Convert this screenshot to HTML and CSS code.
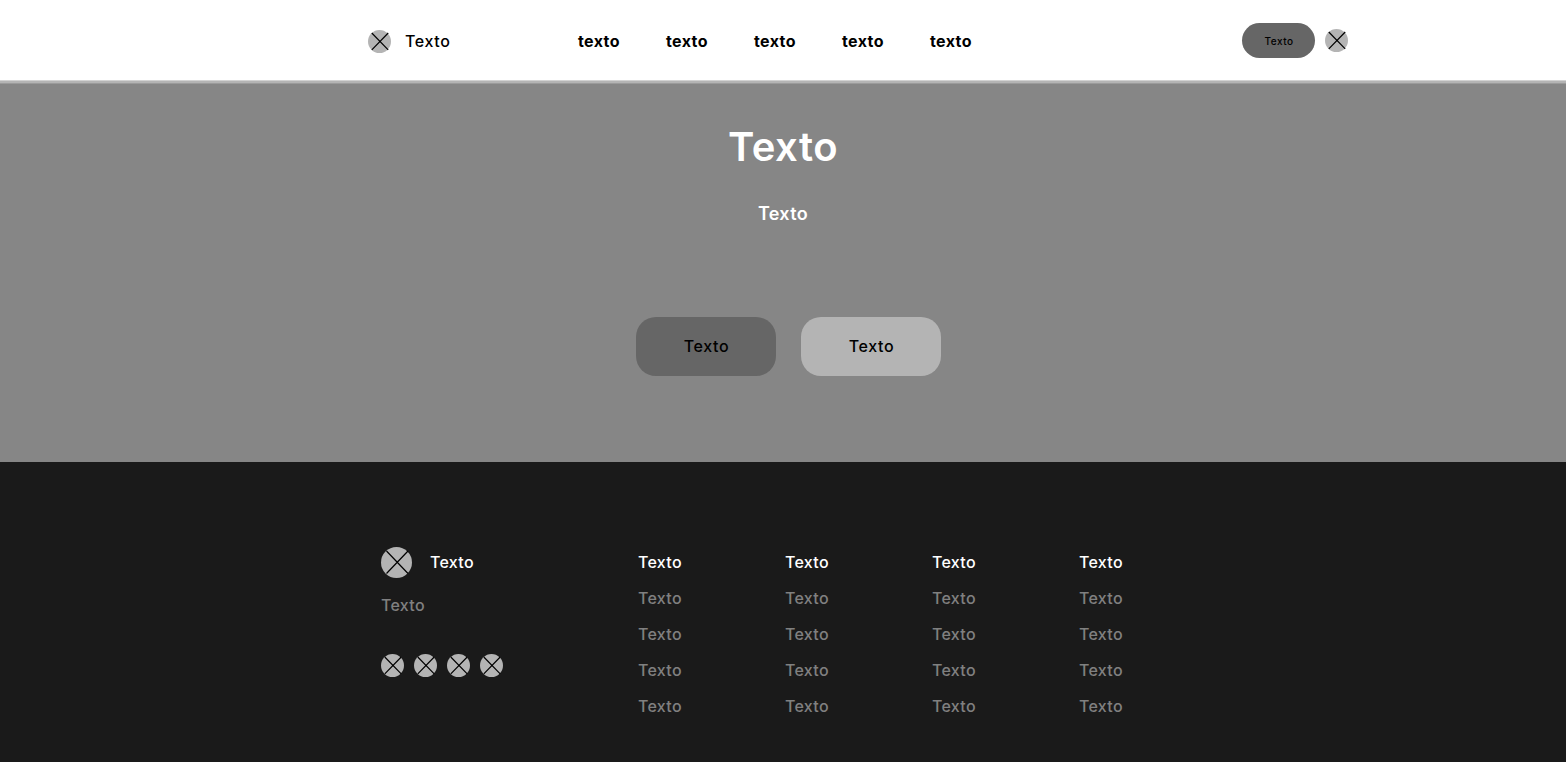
FILE: index.html
```html
<!DOCTYPE html>
<html lang="es">
<head>
<meta charset="utf-8">
<title>Texto</title>
<link rel="stylesheet" href="styles.css">
</head>
<body>
<header class="header">
  <div class="brand">
    <svg class="dot" viewBox="0 0 23 23"><circle cx="11.5" cy="11.5" r="11.5"/><path d="M3.8 3L20.2 19.8M20.2 3L3.8 19.8"/></svg>
    <span>Texto</span>
  </div>
  <nav class="nav"><a>texto</a><a>texto</a><a>texto</a><a>texto</a><a>texto</a></nav>
  <div class="actions">
    <button class="pill">Texto</button>
    <svg class="dot" viewBox="0 0 23 23"><circle cx="11.5" cy="11.5" r="11.5"/><path d="M3.8 3L20.2 19.8M20.2 3L3.8 19.8"/></svg>
  </div>
</header>
<main class="hero">
  <h1>Texto</h1>
  <p>Texto</p>
  <div class="buttons"><button class="btn btn-dark">Texto</button><button class="btn btn-light">Texto</button></div>
</main>
<footer class="footer">
  <section class="about">
    <div class="about-head">
      <svg class="dot dot-large" viewBox="0 0 31 31"><circle cx="15.5" cy="15.5" r="15.5"/><path d="M5.5 4L27 26.5M27 4L5.5 26.5"/></svg>
      <span>Texto</span>
    </div>
    <p>Texto</p>
    <div class="social">
      <svg class="dot" viewBox="0 0 23 23"><circle cx="11.5" cy="11.5" r="11.5"/><path d="M3.8 3L20.2 19.8M20.2 3L3.8 19.8"/></svg>
      <svg class="dot" viewBox="0 0 23 23"><circle cx="11.5" cy="11.5" r="11.5"/><path d="M3.8 3L20.2 19.8M20.2 3L3.8 19.8"/></svg>
      <svg class="dot" viewBox="0 0 23 23"><circle cx="11.5" cy="11.5" r="11.5"/><path d="M3.8 3L20.2 19.8M20.2 3L3.8 19.8"/></svg>
      <svg class="dot" viewBox="0 0 23 23"><circle cx="11.5" cy="11.5" r="11.5"/><path d="M3.8 3L20.2 19.8M20.2 3L3.8 19.8"/></svg>
    </div>
  </section>
  <div class="links">
    <ul><li>Texto</li><li>Texto</li><li>Texto</li><li>Texto</li><li>Texto</li></ul>
    <ul><li>Texto</li><li>Texto</li><li>Texto</li><li>Texto</li><li>Texto</li></ul>
    <ul><li>Texto</li><li>Texto</li><li>Texto</li><li>Texto</li><li>Texto</li></ul>
    <ul><li>Texto</li><li>Texto</li><li>Texto</li><li>Texto</li><li>Texto</li></ul>
  </div>
</footer>
</body>
</html>
```
FILE: styles.css
```css
* { box-sizing: border-box; margin: 0; padding: 0; }
body { font: 500 16px/20px Inter, sans-serif; letter-spacing: 0.6px; color: #000; }
button { font: inherit; letter-spacing: inherit; color: inherit; border: 0; }
.dot { display: block; width: 23px; height: 23px; flex: none; }
.dot circle { fill: #b4b4b4; }
.dot path { stroke: #000; stroke-width: 1.2; fill: none; }
.dot-large { width: 31px; height: 31px; }
.header { display: flex; height: 84px; padding-left: 368px; background: linear-gradient(#fff 80px, #d2d2d2 80px, #d2d2d2 81px, #b4b4b4 81px, #b4b4b4 83px, #9a9a9a 83px); }
.brand { display: flex; align-items: center; gap: 14px; width: 210px; height: 83px; }
.brand span { padding-bottom: 2px; }
.nav { display: flex; align-items: center; height: 81px; width: 664px; font-weight: 700; letter-spacing: 0.4px; }
.nav a { width: 88px; }
.actions { display: flex; align-items: center; gap: 10px; height: 81px; }
.pill { width: 73px; height: 35px; border-radius: 18px; background: #666; font-size: 10px; letter-spacing: 0.5px; padding-left: 1px; }
.hero { display: flex; flex-direction: column; align-items: center; height: 378px; padding-top: 38px; background: #868686; color: #fff; }
.hero h1 { font-size: 40px; line-height: 50px; font-weight: 600; letter-spacing: 0.5px; }
.hero p { margin-top: 32px; font-size: 18px; line-height: 20px; font-weight: 600; letter-spacing: 0.3px; }
.buttons { display: flex; gap: 25px; margin: 93px 0 0 11px; color: #000; }
.btn { width: 140px; height: 59px; padding: 0 0 2px 1px; border-radius: 20px; }
.btn-dark { background: #666; }
.btn-light { background: #b4b4b4; }
.footer { display: flex; height: 300px; padding: 85px 0 0 381px; background: #1a1a1a; color: #808080; letter-spacing: 0.3px; }
.about { width: 257px; }
.about-head { display: flex; align-items: center; gap: 18px; color: #fff; }
.about-head span { padding-bottom: 2px; }
.about p { margin-top: 17px; }
.social { display: flex; gap: 10px; margin-top: 39px; }
.links { display: flex; padding-top: 5px; }
.links ul { list-style: none; width: 147px; }
.links li { margin-bottom: 16px; }
.links li:first-child { color: #fff; }
```
